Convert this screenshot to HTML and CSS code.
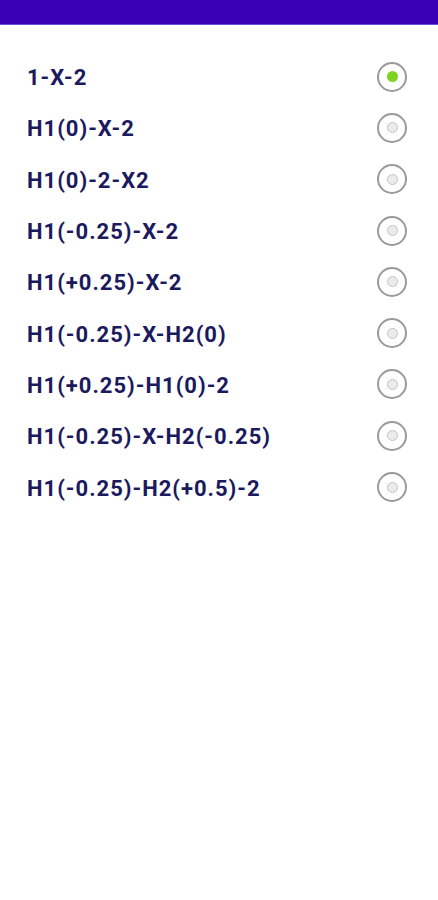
FILE: index.html
```html
<!DOCTYPE html>
<html lang="en">
<head>
    <meta charset="UTF-8">
    <meta name="viewport" content="width=device-width, initial-scale=1.0">
    <title>Options</title>
    <link rel="stylesheet" href="styles.css">
</head>
<body>
    <!-- Top bar -->
    <div class="topBar"></div>

    <!-- Option list -->
    <div class="optionList">
        <label class="option">
            <span class="optionText">1-X-2</span>
            <input type="radio" name="system" checked>
            <span class="radio"></span>
        </label>
        <label class="option">
            <span class="optionText">H1(0)-X-2</span>
            <input type="radio" name="system">
            <span class="radio"></span>
        </label>
        <label class="option">
            <span class="optionText">H1(0)-2-X2</span>
            <input type="radio" name="system">
            <span class="radio"></span>
        </label>
        <label class="option">
            <span class="optionText">H1(-0.25)-X-2</span>
            <input type="radio" name="system">
            <span class="radio"></span>
        </label>
        <label class="option">
            <span class="optionText">H1(+0.25)-X-2</span>
            <input type="radio" name="system">
            <span class="radio"></span>
        </label>
        <label class="option">
            <span class="optionText">H1(-0.25)-X-H2(0)</span>
            <input type="radio" name="system">
            <span class="radio"></span>
        </label>
        <label class="option">
            <span class="optionText">H1(+0.25)-H1(0)-2</span>
            <input type="radio" name="system">
            <span class="radio"></span>
        </label>
        <label class="option">
            <span class="optionText">H1(-0.25)-X-H2(-0.25)</span>
            <input type="radio" name="system">
            <span class="radio"></span>
        </label>
        <label class="option">
            <span class="optionText">H1(-0.25)-H2(+0.5)-2</span>
            <input type="radio" name="system">
            <span class="radio"></span>
        </label>
    </div>
</body>
</html>
```

FILE: styles.css
```css
/* Basic Styling */
body {
    font-family: Roboto, "Liberation Sans", sans-serif;
    margin: 0;
    background-color: #fff;
}

/* Top bar */
.topBar {
    height: 24px;
    background-color: #3a00b6;
    border-bottom: 1px solid #6a4fd0;
}

/* Option list */
.optionList {
    padding-top: 26px;
}

.option {
    display: flex;
    align-items: center;
    justify-content: space-between;
    height: 51.3px;
    padding: 0 31px 0 27px;
    cursor: pointer;
}

.optionText {
    font-size: 22px;
    font-weight: 700;
    letter-spacing: 1px;
    color: #1c1a5e;
    padding-top: 2px;
}

.option input {
    display: none;
}

/* Radio circle */
.radio {
    width: 26px;
    height: 26px;
    border: 2px solid #9a9a9a;
    border-radius: 50%;
    display: flex;
    justify-content: center;
    align-items: center;
}

.radio::after {
    content: "";
    width: 9px;
    height: 9px;
    border-radius: 50%;
    background: #ebebeb;
    border: 1.5px solid #c4c4c4;
}

.option input:checked + .radio::after {
    width: 11px;
    height: 11px;
    border: none;
    background: #7ed321;
}
```
